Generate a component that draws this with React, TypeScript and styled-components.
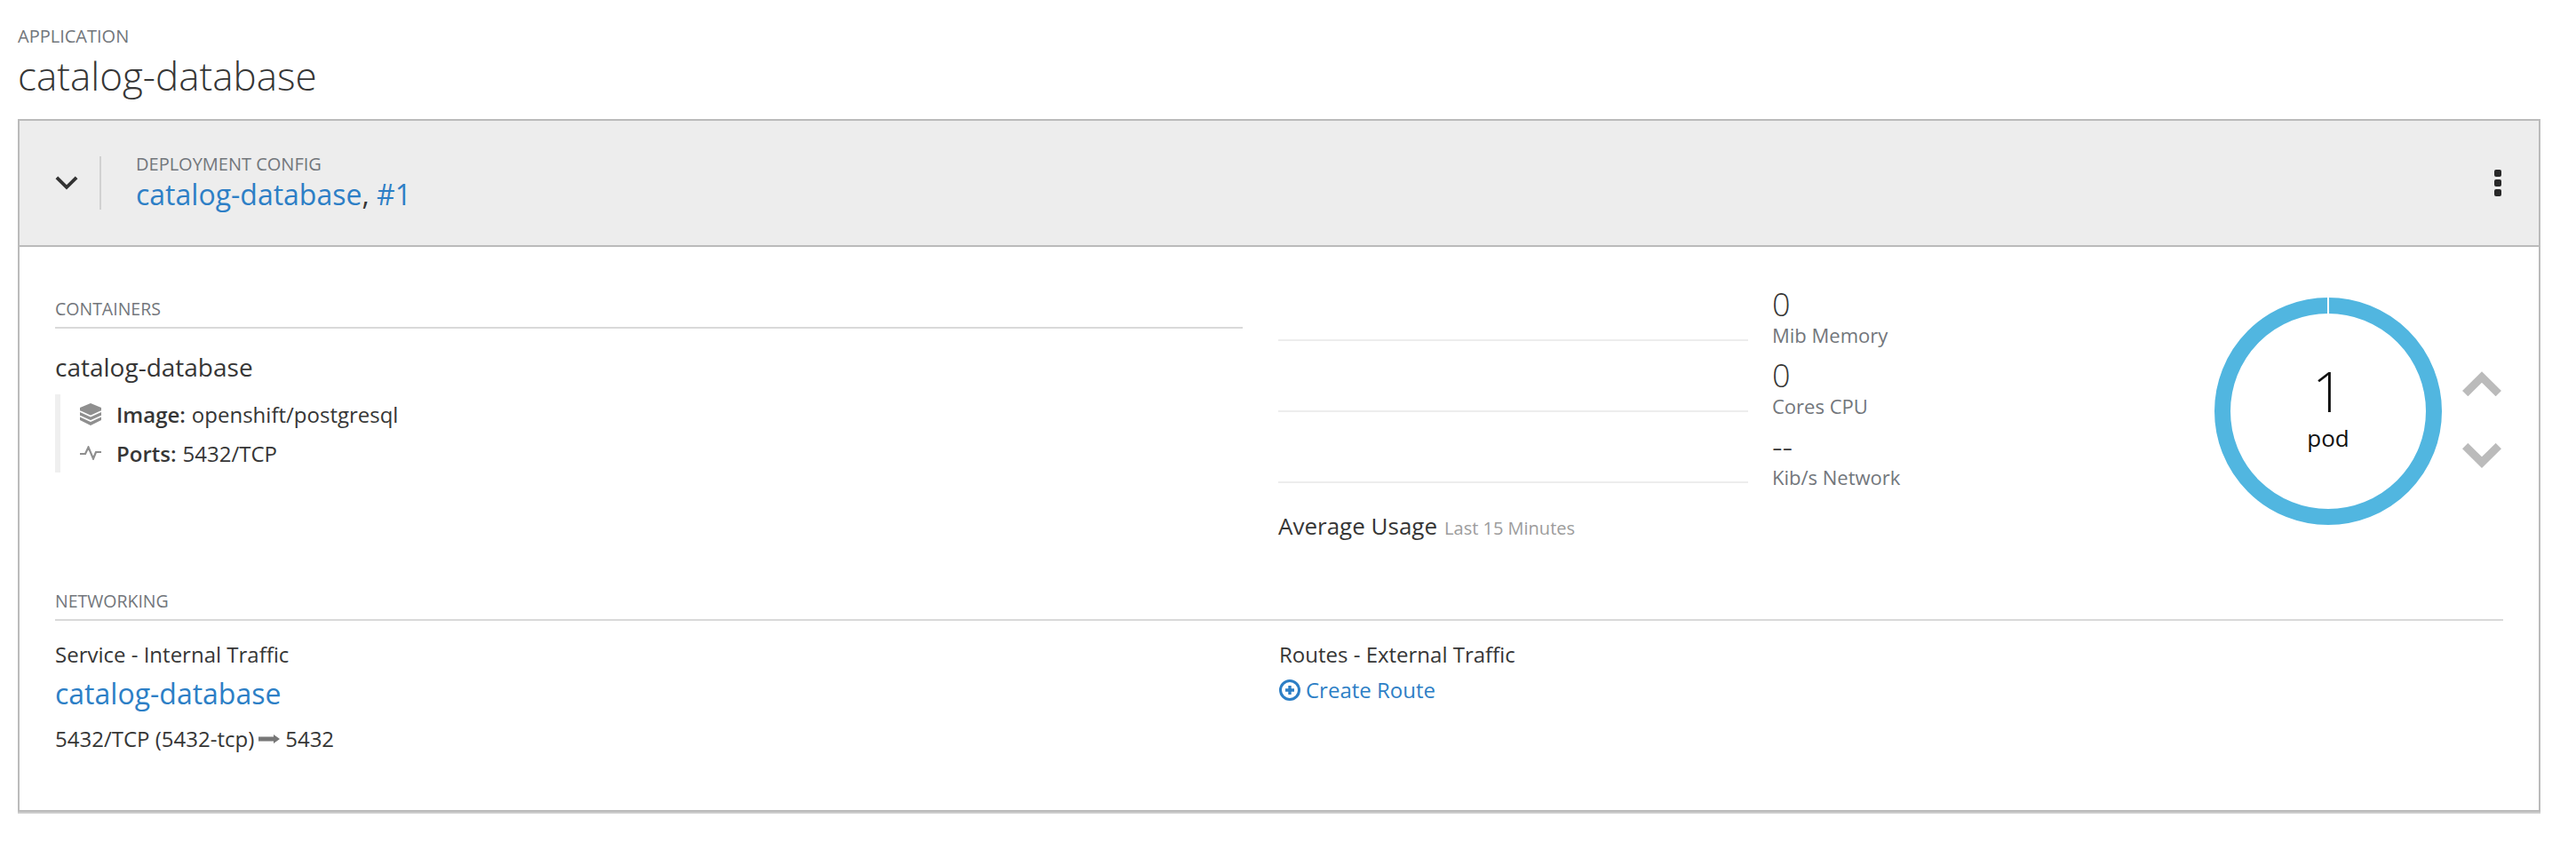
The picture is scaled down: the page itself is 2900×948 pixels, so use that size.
import React from 'react';
import styled, { createGlobalStyle } from 'styled-components';

const GlobalStyle = createGlobalStyle`
  html, body {
    margin: 0;
    padding: 0;
    background: #fff;
    font-family: "Open Sans", "Liberation Sans", sans-serif;
    color: #363636;
  }
`;

const Page = styled.div`
  width: 2900px;
  height: 948px;
  box-sizing: border-box;
  padding: 29px 40px 0 20px;
  overflow: hidden;
`;

const Eyebrow = styled.div`
  font-size: 20px;
  line-height: 24px;
  color: #72767b;
  text-transform: uppercase;
`;

const Title = styled.h1`
  margin: 6px 0 23px;
  font-size: 44px;
  line-height: 52px;
  font-weight: 300;
  color: #363636;
`;

const Card = styled.section`
  border: 2px solid #bbb;
  box-shadow: 0 2px 0 #ccc;
`;

const CardHeader = styled.header`
  height: 142px;
  box-sizing: border-box;
  border-bottom: 2px solid #bbb;
  background: #ededed;
  display: flex;
  align-items: center;
  padding: 0 42px 0 40px;
`;

const Toggle = styled.div`
  height: 60px;
  width: 28px;
  border-right: 2px solid #d1d1d1;
  display: flex;
  align-items: center;
  padding-right: 22px;
`;

const HeaderText = styled.div`
  margin-left: 39px;
  flex: 1;
`;

const HeaderLinks = styled.div`
  font-size: 32px;
  line-height: 42px;
  margin-top: 1px;
`;

const Link = styled.a`
  color: #2d7fc6;
  text-decoration: none;
`;

const Kebab = styled.div`
  display: flex;
  flex-direction: column;
  gap: 3px;
`;

const Dot = styled.span`
  width: 8px;
  height: 8px;
  border-radius: 2px;
  background: #292929;
`;

const CardBody = styled.div`
  padding: 45px 40px 62px;
`;

const Overview = styled.div`
  display: grid;
  grid-template-columns: 1337px 1fr;
  column-gap: 40px;
`;

const ContainersCol = styled.div`
  padding-top: 13px;
`;

const SectionLabel = styled.div`
  font-size: 19.5px;
  line-height: 24px;
  padding-bottom: 8px;
  border-bottom: 2px solid #d9d9d9;
  color: #72767b;
  text-transform: uppercase;
`;

const ContainerName = styled.div`
  margin-top: 25px;
  font-size: 28px;
  line-height: 36px;
`;

const ContainerDetails = styled.div`
  margin-top: 13px;
  border-left: 6px solid #efefef;
  padding: 0 0 0 22px;
  height: 88px;
  box-sizing: border-box;
`;

const DetailRow = styled.div`
  display: flex;
  align-items: center;
  height: 44px;
  font-size: 24px;
  color: #363636;
`;

const DetailIcon = styled.span`
  width: 24px;
  display: flex;
  justify-content: center;
  margin-right: 17px;
  color: #8f8f8f;
`;

const Strong = styled.strong`
  font-weight: 600;
  margin-right: 7px;
`;

const UsageCol = styled.div`
  display: flex;
  justify-content: space-between;
`;

const Metrics = styled.div`
  width: 760px;
`;

const MetricRow = styled.div`
  display: flex;
  height: 80px;
`;

const MetricLine = styled.div`
  flex: 0 0 529px;
  height: 2px;
  margin-top: 59px;
  background: #ededed;
`;

const MetricText = styled.div`
  margin-left: 27px;
`;

const MetricValue = styled.div`
  font-size: 36px;
  line-height: 39px;
  font-weight: 300;
  color: #363636;
`;

const MetricLabel = styled.div`
  font-size: 22px;
  line-height: 30px;
  color: #72767b;
`;

const Average = styled.div`
  margin-top: 11px;
  font-size: 26px;
  line-height: 36px;
`;

const AverageNote = styled.span`
  margin-left: 8px;
  font-size: 20px;
  color: #9c9c9c;
`;

const PodArea = styled.div`
  display: flex;
  align-items: center;
  height: 256px;
  margin-top: 12px;
`;

const Donut = styled.div`
  position: relative;
  width: 256px;
  height: 256px;
`;

const DonutLabel = styled.div`
  position: absolute;
  inset: 0;
  display: flex;
  flex-direction: column;
  align-items: center;
  justify-content: center;
  color: #111;
`;

const PodCount = styled.div`
  font-size: 62px;
  line-height: 70px;
  font-weight: 300;
  margin-top: -11px;
`;

const PodUnit = styled.div`
  font-size: 26px;
  line-height: 36px;
`;

const Scaler = styled.div`
  display: flex;
  flex-direction: column;
  gap: 53px;
  margin: 19px 2px 0 23px;
`;

const Networking = styled.div`
  margin-top: 52px;
`;

const NetworkGrid = styled.div`
  display: grid;
  grid-template-columns: 1338px 1fr;
  column-gap: 40px;
  margin-top: 20px;
`;

const NetworkHeading = styled.div`
  font-size: 24px;
  line-height: 36px;
`;

const ServiceLink = styled(Link)`
  display: block;
  margin-top: 4px;
  font-size: 32px;
  line-height: 44px;
`;

const PortLine = styled.div`
  display: flex;
  align-items: center;
  margin-top: 11px;
  font-size: 24px;
  line-height: 36px;
`;

const RouteLink = styled(Link)`
  display: flex;
  align-items: center;
  gap: 6px;
  margin-top: 4px;
  font-size: 24px;
  line-height: 36px;
`;

const Chevron = ({ up = false, color, size, weight }: { up?: boolean; color: string; size: number; weight: number }) => (
  <svg width={size} height={size * 0.64} viewBox="0 0 44 28" style={{ display: 'block' }}>
    <path
      d={up ? 'M3.2 25 L22 6.4 L40.8 25' : 'M3.2 3 L22 21.6 L40.8 3'}
      fill="none"
      stroke={color}
      strokeWidth={weight}
      strokeLinejoin="miter"
    />
  </svg>
);

const StackIcon = () => (
  <svg width="24" height="25" viewBox="0 0 24 25">
    <path d="M12 0 L24 5 V19 L12 25 L0 19 V5 Z" fill="currentColor" />
    <path d="M0 9 L12 14.5 L24 9 M0 14.5 L12 20 L24 14.5" fill="none" stroke="#fff" strokeWidth="1.6" />
  </svg>
);

const PortIcon = () => (
  <svg width="24" height="16" viewBox="0 0 24 16">
    <path d="M0 9 H6 L9.5 1.5 L15 14.5 L18 7 H24" fill="none" stroke="currentColor" strokeWidth="2.2" />
  </svg>
);

const ArrowIcon = () => (
  <svg width="24" height="12" viewBox="0 0 24 12" style={{ margin: '0 6px 0 5px' }}>
    <path d="M0 3.6 H17 V1 L24 6 L17 11 V8.4 H0 Z" fill="#777" />
  </svg>
);

const PlusCircleIcon = () => (
  <svg width="24" height="24" viewBox="0 0 24 24">
    <circle cx="12" cy="12" r="10.5" fill="none" stroke="currentColor" strokeWidth="3" />
    <path d="M12 7 V17 M7 12 H17" stroke="currentColor" strokeWidth="3.4" />
  </svg>
);

const metrics = [
  { value: '0', label: 'Mib Memory' },
  { value: '0', label: 'Cores CPU' },
  { value: '--', label: 'Kib/s Network' },
];

export default function App() {
  return (
    <>
      <GlobalStyle />
      <Page>
        <Eyebrow>Application</Eyebrow>
        <Title>catalog-database</Title>
        <Card>
          <CardHeader>
            <Toggle>
              <Chevron color="#333" size={26} weight={6.5} />
            </Toggle>
            <HeaderText>
              <Eyebrow>Deployment Config</Eyebrow>
              <HeaderLinks>
                <Link href="#">catalog-database</Link>, <Link href="#">#1</Link>
              </HeaderLinks>
            </HeaderText>
            <Kebab>
              <Dot />
              <Dot />
              <Dot />
            </Kebab>
          </CardHeader>
          <CardBody>
            <Overview>
              <ContainersCol>
                <SectionLabel>Containers</SectionLabel>
                <ContainerName>catalog-database</ContainerName>
                <ContainerDetails>
                  <DetailRow>
                    <DetailIcon>
                      <StackIcon />
                    </DetailIcon>
                    <Strong>Image:</Strong> openshift/postgresql
                  </DetailRow>
                  <DetailRow>
                    <DetailIcon>
                      <PortIcon />
                    </DetailIcon>
                    <Strong>Ports:</Strong> 5432/TCP
                  </DetailRow>
                </ContainerDetails>
              </ContainersCol>
              <UsageCol>
                <Metrics>
                  {metrics.map((m) => (
                    <MetricRow key={m.label}>
                      <MetricLine />
                      <MetricText>
                        <MetricValue>{m.value}</MetricValue>
                        <MetricLabel>{m.label}</MetricLabel>
                      </MetricText>
                    </MetricRow>
                  ))}
                  <Average>
                    Average Usage<AverageNote>Last 15 Minutes</AverageNote>
                  </Average>
                </Metrics>
                <PodArea>
                  <Donut>
                    <svg width="256" height="256" viewBox="0 0 256 256">
                      <circle cx="128" cy="128" r="119" fill="none" stroke="#51b6e0" strokeWidth="18" />
                      <rect x="127" y="0" width="2" height="20" fill="#fff" />
                    </svg>
                    <DonutLabel>
                      <PodCount>1</PodCount>
                      <PodUnit>pod</PodUnit>
                    </DonutLabel>
                  </Donut>
                  <Scaler>
                    <Chevron up color="#bbb" size={44} weight={9} />
                    <Chevron color="#bbb" size={44} weight={9} />
                  </Scaler>
                </PodArea>
              </UsageCol>
            </Overview>
            <Networking>
              <SectionLabel>Networking</SectionLabel>
              <NetworkGrid>
                <div>
                  <NetworkHeading>Service - Internal Traffic</NetworkHeading>
                  <ServiceLink href="#">catalog-database</ServiceLink>
                  <PortLine>
                    5432/TCP (5432-tcp)
                    <ArrowIcon />
                    5432
                  </PortLine>
                </div>
                <div>
                  <NetworkHeading>Routes - External Traffic</NetworkHeading>
                  <RouteLink href="#">
                    <PlusCircleIcon />
                    Create Route
                  </RouteLink>
                </div>
              </NetworkGrid>
            </Networking>
          </CardBody>
        </Card>
      </Page>
    </>
  );
}
